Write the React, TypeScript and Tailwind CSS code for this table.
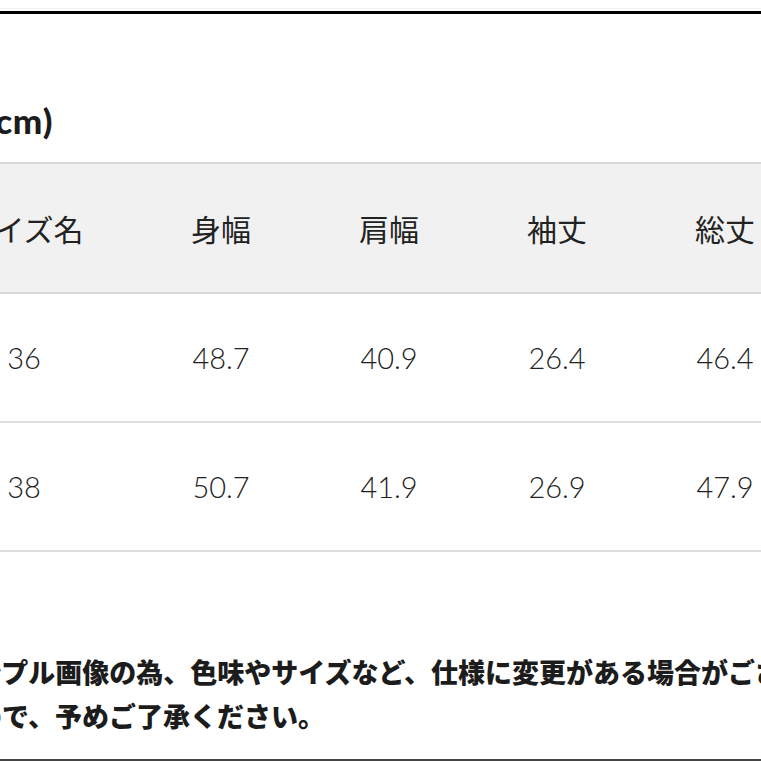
const headers = ["サイズ名", "身幅", "肩幅", "袖丈", "総丈"];

const rows = [
  ["36", "48.7", "40.9", "26.4", "46.4"],
  ["38", "50.7", "41.9", "26.9", "47.9"],
];

const cols = "grid grid-cols-[226px_168px_168px_168px_168px]";

export default function App() {
  return (
    <div className="w-[761px] h-[761px] overflow-hidden bg-white flex flex-col font-['Lato','Noto_Sans_CJK_JP',sans-serif] text-[#1c1c1c]">
      <div className="h-[9px] border-b border-[#f0f0f0]" />
      <div className="mt-[2px] h-[3px] bg-black" />

      <div className="mt-[86px] mb-[22px] flex justify-end w-[53px]">
        <span className="shrink-0 whitespace-nowrap text-[35px] leading-[40px] font-black tracking-[0.5px]">サイズ(cm)</span>
      </div>

      <div className="ml-[-89px] w-[898px]">
        <div className={`${cols} h-[132px] border-y-2 border-[#d8d8d8] bg-[#f1f1f1]`}>
          {headers.map((h) => (
            <div key={h} className="flex items-center justify-center whitespace-nowrap text-[30px] text-[#222] font-['Noto_Sans_CJK_JP',sans-serif]">
              {h}
            </div>
          ))}
        </div>
        {rows.map((r, i) => (
          <div key={i} className={`${cols} h-[129px] border-b-2 border-[#dedede]`}>
            {r.map((v, j) => (
              <div key={j} className="flex items-center justify-center text-[29px] font-light text-[#222]">
                {v}
              </div>
            ))}
          </div>
        ))}
      </div>

      <div className="mt-[98px] ml-[-52px] font-['Noto_Sans_CJK_JP',sans-serif] font-black text-[27px] leading-[44px] whitespace-nowrap">
        <p>サンプル画像の為、色味やサイズなど、仕様に変更がある場合がございま</p>
        <p>すので、予めご了承ください。</p>
      </div>

      <div className="mt-auto h-[2px] bg-[#444]" />
    </div>
  );
}
